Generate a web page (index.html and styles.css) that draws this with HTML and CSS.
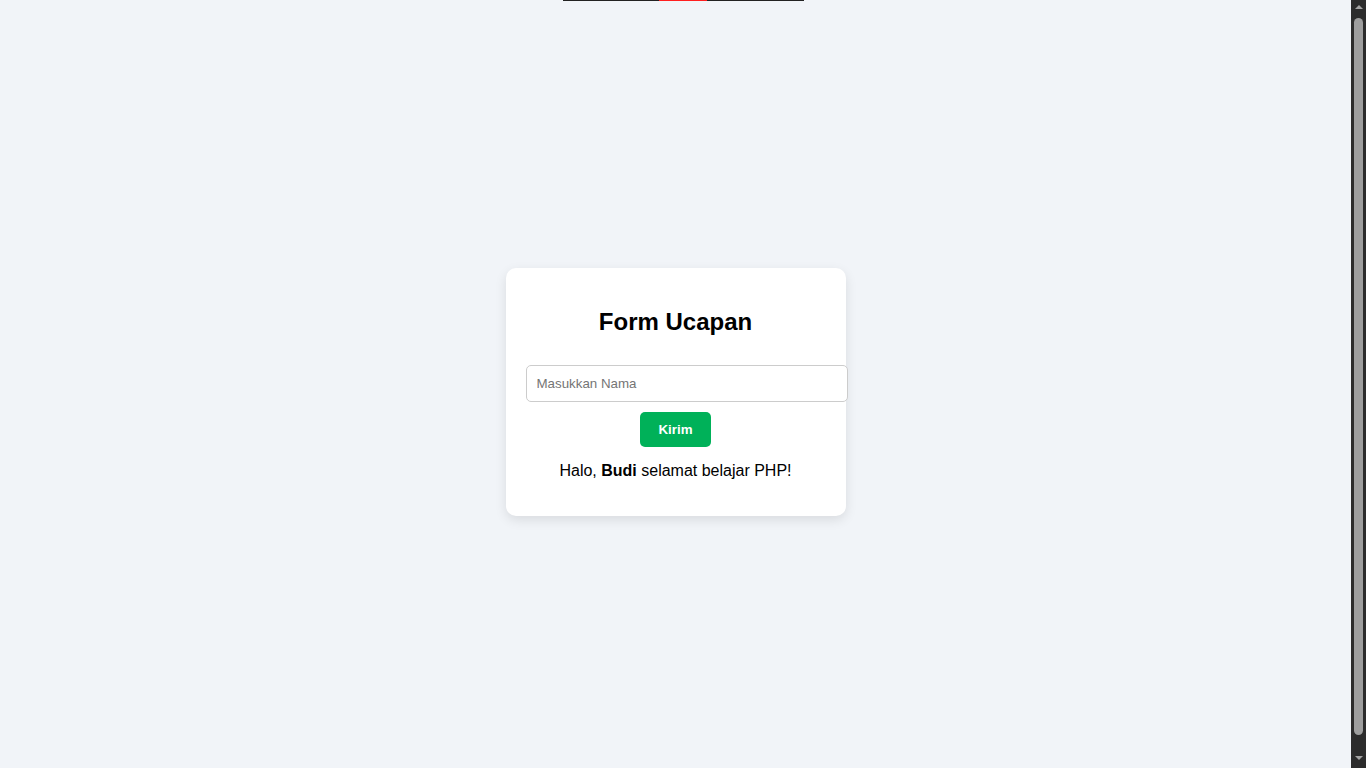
FILE: index.html
```html
<!DOCTYPE html>
<html lang="id">
<head>
<meta charset="utf-8">
<title>Form Ucapan</title>
<link rel="stylesheet" href="styles.css">
</head>
<body>
<main class="page">
  <div class="topline"><span class="topline-red"></span></div>
  <div class="card">
    <h2 class="title">Form Ucapan</h2>
    <form class="form" onsubmit="return false;">
      <input class="field" type="text" placeholder="Masukkan Nama">
      <button class="btn" type="submit">Kirim</button>
    </form>
    <p class="greet">Halo, <b>Budi</b> selamat belajar PHP!</p>
  </div>
</main>
<aside class="scrollbar">
  <span class="arrow arrow-up"></span>
  <span class="thumb"></span>
  <span class="arrow arrow-down"></span>
</aside>
</body>
</html>
```
FILE: styles.css
```css
html, body {
  margin: 0;
  height: 100%;
  overflow: hidden;
}
body {
  display: flex;
  background: #f1f4f8;
  font-family: "Liberation Sans", Arial, sans-serif;
}
.page {
  position: relative;
  flex: 1;
  display: flex;
  align-items: center;
  justify-content: center;
  padding-top: 16px;
  box-sizing: border-box;
  height: 100vh;
}
.topline {
  position: absolute;
  top: 0;
  left: 563px;
  width: 241px;
  height: 1px;
  background: #222;
}
.topline-red {
  position: absolute;
  left: 96px;
  width: 48px;
  height: 1px;
  background: #ff1f1f;
}
.card {
  width: 300px;
  padding: 20px;
  background: #fff;
  border-radius: 10px;
  box-shadow: 0 4px 12px rgba(0, 0, 0, 0.1);
  text-align: center;
}
.title {
  margin: 20px 0;
  font-size: 24px;
  font-weight: bold;
  color: #000;
}
.form {
  margin: 0;
  padding-top: 9px;
}
.field {
  display: block;
  width: 100%;
  margin: 0 0 10px;
  padding: 10px;
  border: 1px solid #ccc;
  border-radius: 5px;
  font-family: "Liberation Sans", Arial, sans-serif;
  font-size: 13.33px;
  box-sizing: content-box;
}
.field::placeholder {
  color: #757575;
}
.btn {
  padding: 10px 18px;
  border: none;
  border-radius: 5px;
  background: #00b159;
  color: #fff;
  font-family: "Liberation Sans", Arial, sans-serif;
  font-size: 13.33px;
  font-weight: bold;
}
.greet {
  margin: 15px 0 16px;
  font-size: 16px;
  color: #000;
}
.scrollbar {
  width: 15px;
  height: 100vh;
  background: #2c2c2c;
  display: flex;
  flex-direction: column;
  align-items: center;
}
.arrow {
  width: 0;
  height: 0;
  border-left: 4px solid transparent;
  border-right: 4px solid transparent;
}
.arrow-up {
  margin-top: 5px;
  border-bottom: 4px solid #a3a3a3;
}
.arrow-down {
  margin-bottom: 8px;
  border-top: 4px solid #a3a3a3;
}
.thumb {
  width: 9px;
  margin: 9px 0 21px;
  flex: 1;
  background: #9e9e9e;
  border-radius: 5px;
}
```
